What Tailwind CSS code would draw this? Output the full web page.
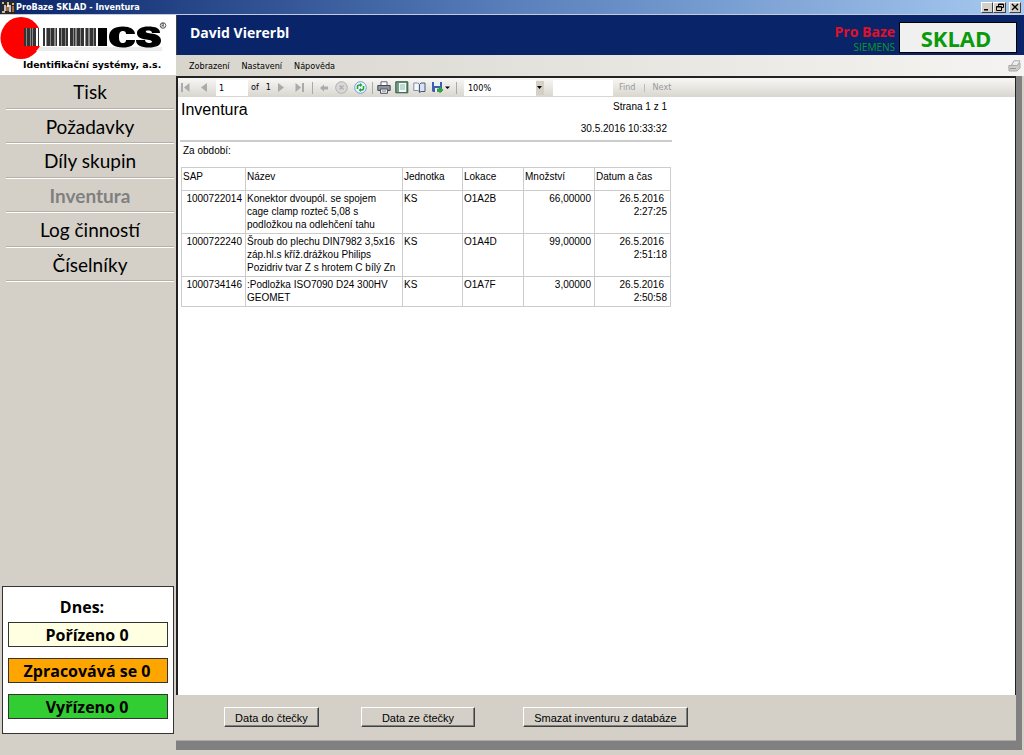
<!DOCTYPE html>
<html lang="cs">
<head>
<meta charset="utf-8">
<title>ProBaze SKLAD - Inventura</title>
<script src="https://cdn.jsdelivr.net/npm/@tailwindcss/browser@4"></script>
</head>
<body class="flex h-screen flex-col overflow-hidden bg-[#d4d0c8] font-['Liberation_Sans',sans-serif] text-[10px] leading-[13px] text-black">

<!-- Window title bar -->
<header class="flex h-[15px] shrink-0 items-center gap-px border-b border-[#c3cbdc] bg-linear-to-r from-[#0a246a] via-[#5a7fbb] to-[#a6caf0] pr-[3px] pl-px">
  <svg class="h-[13px] w-[14px]" viewBox="0 0 14 13" aria-hidden="true"><path fill="#2b2724" d="M0 0h14v13H0z"/><path fill="#d8b878" d="M1 1h2v2H1zM6 1h2v3H6zM11 2h2v2h-2zM1 10h3v2H1z"/><path fill="#b9c4cf" d="M3 4h2v6H3zM8 4h2v7H8z"/><path fill="#a56a35" d="M5 5h3v5H5zM11 5h2v6h-2z"/><path fill="#eee" d="M6 4h2v2H6z"/></svg>
  <h1 class="flex-1 font-['DejaVu_Sans_Condensed','DejaVu_Sans',sans-serif] text-[9px] font-bold text-white">ProBaze SKLAD - Inventura</h1>
  <div class="flex">
    <button aria-label="Minimalizovat" class="flex h-[11px] w-3 items-center justify-center border border-t-white border-r-[#404040] border-b-[#404040] border-l-white bg-[#d4d0c8]"><svg class="size-2" viewBox="0 0 8 8"><path d="M1 6h4v1.500H1z"/></svg></button>
    <button aria-label="Obnovit" class="flex h-[11px] w-[13px] items-center justify-center border border-t-white border-r-[#404040] border-b-[#404040] border-l-white bg-[#d4d0c8]"><svg class="size-2" viewBox="0 0 8 8" fill="none" stroke="#000"><path d="M2.500 3V1h5v3.500H6M.5 3.500h5v4h-5zM2 1.500h5.500M0 4h5.500"/></svg></button>
    <button aria-label="Zavřít" class="ml-[3px] flex h-[11px] w-3 items-center justify-center border border-t-white border-r-[#404040] border-b-[#404040] border-l-white bg-[#d4d0c8]"><svg class="size-2" viewBox="0 0 8 8" fill="none" stroke="#000" stroke-width="1.400"><path d="M1 1l6 6M7 1L1 7"/></svg></button>
  </div>
</header>

<div class="flex min-h-0 flex-1">
  <!-- Sidebar -->
  <aside class="flex w-[176px] shrink-0 flex-col">
    <svg class="h-[60px] w-full bg-white" viewBox="0 0 176 60" role="img" aria-label="ICS Identifikační systémy, a.s.">
      <ellipse cx="21" cy="23" rx="20.500" ry="21" fill="#fe0000"/>
      <path fill="#ececec" d="M40 32h122v4H36z"/>
      <path fill="#fff" d="M24 13h75v18H24z"/>
      <path fill="#888" d="M24 13h12v18H24zM46 13h11v18H46zM59 13h9v18h-9zM70 13h13v18H70zM85 13h10v18H85z"/>
      <path fill="#333" d="M24 13h2v18h-2zM27 13h3v18h-3zM31 13h1v18h-1zM33 13h3v18h-3zM38 13h1v18h-1zM43 13h2v18h-2zM47 13h3v18h-3zM51 13h3v18h-3zM56 13h1v18h-1zM59 13h2v18h-2zM62 13h3v18h-3zM66 13h2v18h-2zM70 13h3v18h-3zM74 13h1v18h-1zM77 13h3v18h-3zM81 13h3v18h-3zM86 13h2v18h-2zM90 13h3v18h-3zM94 13h2v18h-2z"/>
      <path fill="#000" d="M98 13h9v18h-9z"/>
      <path fill="#000" d="M135 19h-9c0-2-1-3-3-3-3 0-4 2-4 6s1 6 4 6c2 0 3-1 3-3h9c0 5-5 7.500-12 7.500-9 0-14-4-14-10.500s5-10.500 14-10.500c7 0 12 3 12 7.500z"/>
      <path fill="#000" d="M160 18h-8c0-2-2-2.500-4-2.500-3 0-3 2 0 2.500 7 1 13 2 13 7.500 0 5-5 7-12 7-8 0-13-2-13-7.500h9c0 2 2 3 4 3 4 0 4-2.500 0-3-7-1-12-2-12-7 0-4 5-6.500 11-6.500 8 0 12 2 12 6.500z"/>
      <circle cx="163" cy="10.500" r="2.800" fill="none" stroke="#333" stroke-width=".8"/><path d="M162 12.500v-4h1.500v2H162m1.200 0l1 2" fill="none" stroke="#333" stroke-width=".6"/>
      <text x="23" y="53" font-family="DejaVu Sans" font-weight="700" font-size="9.400">Identifikační systémy, a.s.</text>
    </svg>
    <nav class="mr-0.5 ml-1.5 grid h-[207px] grid-rows-6 text-center font-['Lato',sans-serif] text-[19px] leading-[33px]">
      <a href="#" class="border-b border-white shadow-[inset_0_-1px_0_#b5b1a9]">Tisk</a>
      <a href="#" class="border-b border-white shadow-[inset_0_-1px_0_#b5b1a9]">Požadavky</a>
      <a href="#" class="border-b border-white shadow-[inset_0_-1px_0_#b5b1a9]">Díly skupin</a>
      <a href="#" aria-current="page" class="border-b border-white font-bold text-[#808080] shadow-[inset_0_-1px_0_#b5b1a9]">Inventura</a>
      <a href="#" class="border-b border-white shadow-[inset_0_-1px_0_#b5b1a9]">Log činností</a>
      <a href="#" class="border-b border-white shadow-[inset_0_-1px_0_#b5b1a9]">Číselníky</a>
    </nav>
    <section class="mx-0.5 mt-auto mb-[21px] flex flex-col gap-[11px] border border-[#333] bg-white px-[5px] pt-2 pb-[14px] text-center font-['Open_Sans',sans-serif] text-[16px] leading-[25px] font-bold">
      <h2 class="-mb-[9px] pr-3">Dnes:</h2>
      <p class="h-[25px] border border-[#333] bg-[#ffffe1] pr-0.5">Pořízeno 0</p>
      <p class="h-[25px] border border-[#333] bg-[#ffa500] pr-0.5">Zpracovává se 0</p>
      <p class="h-[25px] border border-[#333] bg-[#32cd32] pr-0.5">Vyřízeno 0</p>
    </section>
  </aside>

  <div class="flex min-w-0 flex-1 flex-col">
    <!-- User banner -->
    <div class="flex h-10 shrink-0 justify-between border-l border-[#404040] bg-[#0a246a] pr-[7px] pl-[13px] font-['Open_Sans',sans-serif] font-bold">
      <div class="pt-2 text-[14px] leading-5 text-white">David Viererbl</div>
      <div class="flex gap-1 pt-[7px]">
        <div class="text-right">
          <div class="text-[14px] leading-[19px] text-[#e0102c]">Pro Baze</div>
          <div class="text-[10px] leading-[12px] font-normal text-[#0a9a28]">SIEMENS</div>
        </div>
        <div class="h-[31px] w-[118px] border border-black bg-[#f0f0f0] pr-1 text-center text-[22px] leading-[31px] text-[#0a9a0a]">SKLAD</div>
      </div>
    </div>
    <!-- Menu bar -->
    <div class="flex h-[21px] shrink-0 items-center bg-linear-to-r from-[#d8d5cd] to-[#f5f4f2] pt-px pr-[3px] pl-[13px] font-['DejaVu_Sans_Condensed','DejaVu_Sans',sans-serif] text-[9px]">
      <button class="mr-3">Zobrazení</button>
      <button class="mr-3">Nastavení</button>
      <button>Nápověda</button>
      <svg class="ml-auto h-3 w-[13px]" viewBox="0 0 13 12" aria-hidden="true"><path fill="#eee" stroke="#aaa" d="M3.500 5L6 .8h6L9.500 6z"/><path fill="#ccc" stroke="#aaa" d="M.8 5.500h8L12 3v5l-3 3H1z"/><path stroke="#999" d="M2 8.500h6"/></svg>
    </div>

    <!-- Report viewer -->
    <main class="mr-0.5 mb-[5px] flex min-h-0 flex-1 flex-col border-r-6 border-b-9 border-[#808080]">
      <div class="flex min-h-0 flex-1 flex-col border-t-2 border-r border-l-2 border-[#222] bg-white">
        <div role="toolbar" class="flex h-[19px] shrink-0 items-center bg-linear-to-b from-[#f8f7f5] to-[#d9d6cf] font-['DejaVu_Sans_Condensed','DejaVu_Sans',sans-serif] text-[9px]">
          <button aria-label="První strana" class="ml-[3px]"><svg class="h-[9px] w-[9px]" viewBox="0 0 9 9" fill="#aaa"><path d="M0 0h2v9H0zM8.500 0v9L3 4.500z"/></svg></button>
          <button aria-label="Předchozí strana" class="ml-[11px]"><svg class="h-[9px] w-[6px]" viewBox="0 0 6 9" fill="#aaa"><path d="M6 0v9L0 4.500z"/></svg></button>
          <input aria-label="Strana" value="1" class="ml-[9px] h-4 w-[32px] bg-white pl-[3px]">
          <span class="ml-[3px]">of</span><span class="ml-[7px]">1</span>
          <button aria-label="Další strana" class="ml-[7px]"><svg class="h-[9px] w-[6px]" viewBox="0 0 6 9" fill="#aaa"><path d="M0 0v9l6-4.500z"/></svg></button>
          <button aria-label="Poslední strana" class="ml-[11px]"><svg class="h-[9px] w-[9px]" viewBox="0 0 9 9" fill="#aaa"><path d="M7 0h2v9H7zM.5 0v9L6 4.500z"/></svg></button>
          <span class="ml-[8px] h-3 w-px bg-[#aaa]"></span>
          <button aria-label="Zpět" class="ml-[7px]"><svg class="size-2" viewBox="0 0 8 8" fill="#aaa"><path d="M0 4l4-3.500v2h4v3H4v2z"/></svg></button>
          <button aria-label="Zastavit" class="ml-[7px]"><svg class="size-[13px]" viewBox="0 0 13 13" fill="none" stroke="#b0b0b0"><circle cx="6.500" cy="6.500" r="5.800" fill="#d8d8d6"/><path stroke-width="1.500" d="M4.500 4.500l4 4m0-4l-4 4"/></svg></button>
          <button aria-label="Obnovit sestavu" class="ml-[6px]"><svg class="size-[13px]" viewBox="0 0 13 13" fill="none"><circle cx="6.500" cy="6.500" r="5.800" fill="#eef6ff" stroke="#6f9fd0"/><path stroke="#22a535" stroke-width="1.600" d="M3.500 8V5.500c0-1 1-1.500 2.500-1.500M9.500 5v2.500c0 1-1 1.500-2.500 1.500"/><path fill="#22a535" d="M6 2l2.500 2L6 6zM7 7L4.500 9 7 11z"/></svg></button>
          <span class="ml-[5px] h-3 w-px bg-[#aaa]"></span>
          <button aria-label="Tisk" class="ml-1"><svg class="h-[13px] w-[14px]" viewBox="0 0 14 13"><path fill="#fff" stroke="#667" d="M4 5V.8h6V5"/><path fill="#8d949e" stroke="#444b55" d="M.8 4.500h12.400v5H.8z"/><path fill="#e8edf3" stroke="#555" d="M3.500 8h7v4.300h-7z"/><path stroke="#6b88b0" d="M5 10h4"/></svg></button>
          <button aria-label="Rozložení tisku" class="ml-1"><svg class="h-[13px] w-[14px]" viewBox="0 0 14 13"><path fill="#6fa184" stroke="#2c5541" d="M.8.8h12v11h-12z"/><path fill="#f6fbfa" d="M4 2h7v9H4z"/><path stroke="#8ba" d="M5 4h5M5 6h5M5 8h5"/></svg></button>
          <button aria-label="Vzhled stránky" class="ml-1"><svg class="h-[13px] w-[13px]" viewBox="0 0 13 13"><path fill="#f5f8fc" stroke="#7d8ea8" d="M.8 2h4l1.500 1v7.500l-1.500-1h-4z"/><path fill="#d9e4f1" stroke="#445a7c" d="M6.500 3.500L8 2h4v8.500H8l-1.500 1z"/></svg></button>
          <button aria-label="Export" class="ml-[5px] flex items-center"><svg class="h-[13px] w-[19px]" viewBox="0 0 19 13"><path fill="#3f5fae" d="M1 1h10v10H2L1 10z"/><path fill="#eaf1fb" d="M3 1h6v4H3zM4 7h4v4H4z"/><path fill="#32a43a" d="M6 7.500h2.500V5.500L12.500 9l-4 3.500V11H6z"/><path d="M14 5.500h5L16.500 8z"/></svg></button>
          <span class="ml-[6px] h-3 w-px bg-[#aaa]"></span>
          <select aria-label="Lupa" class="ml-[7px] h-4 w-[72px] appearance-none bg-white pl-1 text-[9px] leading-4"><option>100%</option></select>
          <span class="flex h-[14px] w-2 items-center justify-center bg-[#d4d0c8]" aria-hidden="true"><svg class="h-[3px] w-[5px]" viewBox="0 0 5 3"><path d="M0 0h5L2.500 3z"/></svg></span>
          <input aria-label="Hledat text" class="ml-[9px] h-4 w-[60px] bg-white">
          <button class="ml-[6px] text-[#999]">Find</button>
          <span class="mx-[8px] h-2 w-px bg-[#bbb]"></span>
          <button class="text-[#999]">Next</button>
        </div>

        <article class="min-h-0 flex-1 pl-[2px]">
          <div class="flex h-[45px] w-[492px] justify-between border-b-2 border-[#ccc] pr-[5px]">
            <h2 class="pt-[3px] pl-px text-[16px] leading-5">Inventura</h2>
            <div class="flex flex-col gap-2 pt-[3px] text-right">
              <p>Strana 1 z 1</p>
              <p class="pt-px">30.5.2016 10:33:32</p>
            </div>
          </div>
          <p class="pt-[2px] pb-[10px] pl-[3px]">Za období:</p>
          <table class="ml-px w-[489px] table-fixed border-collapse text-left align-top [&_td]:border [&_td]:border-[#ccc] [&_td]:pt-px [&_td]:pr-[3px] [&_td]:pb-0.5 [&_td]:pl-px [&_td]:align-top [&_th]:border [&_th]:border-[#ccc] [&_th]:px-px [&_th]:pt-0.5 [&_th]:align-top [&_th]:font-normal">
            <colgroup><col class="w-[64px]"><col class="w-[157px]"><col class="w-[60px]"><col class="w-[61px]"><col class="w-[71px]"><col class="w-[76px]"></colgroup>
            <thead><tr class="h-[23px]"><th>SAP</th><th>Název</th><th>Jednotka</th><th>Lokace</th><th>Množství</th><th>Datum a čas</th></tr></thead>
            <tbody>
              <tr><td class="text-right">1000722014</td><td>Konektor dvoupól. se spojem<br>cage clamp rozteč 5,08 s<br>podložkou na odlehčení tahu</td><td>KS</td><td>O1A2B</td><td class="text-right">66,00000</td><td class="text-right"><span class="pr-[3px]">26.5.2016</span><br>2:27:25</td></tr>
              <tr><td class="text-right">1000722240</td><td class="whitespace-nowrap">Šroub do plechu DIN7982 3,5x16<br>záp.hl.s kříž.drážkou Philips<br>Pozidriv tvar Z s hrotem C bílý Zn</td><td>KS</td><td>O1A4D</td><td class="text-right">99,00000</td><td class="text-right"><span class="pr-[3px]">26.5.2016</span><br>2:51:18</td></tr>
              <tr><td class="text-right">1000734146</td><td>:Podložka ISO7090 D24 300HV<br>GEOMET</td><td>KS</td><td>O1A7F</td><td class="text-right">3,00000</td><td class="text-right"><span class="pr-[3px]">26.5.2016</span><br>2:50:58</td></tr>
            </tbody>
          </table>
        </article>
      </div>

      <div class="flex h-[46px] shrink-0 items-start border-b border-b-[#aaa] bg-[#d4d0c8] pt-3 pl-12 text-[11px] leading-[20px]">
        <button class="h-5 w-[95px] border border-t-white border-r-[#404040] border-b-[#404040] border-l-white shadow-[inset_-1px_-1px_0_#808080]">Data do čtečky</button>
        <button class="ml-[42px] h-5 w-[114px] border border-t-white border-r-[#404040] border-b-[#404040] border-l-white shadow-[inset_-1px_-1px_0_#808080]">Data ze čtečky</button>
        <button class="ml-[48px] h-5 w-[165px] border border-t-white border-r-[#404040] border-b-[#404040] border-l-white shadow-[inset_-1px_-1px_0_#808080]">Smazat inventuru z databáze</button>
      </div>
    </main>
  </div>
</div>
</body>
</html>
